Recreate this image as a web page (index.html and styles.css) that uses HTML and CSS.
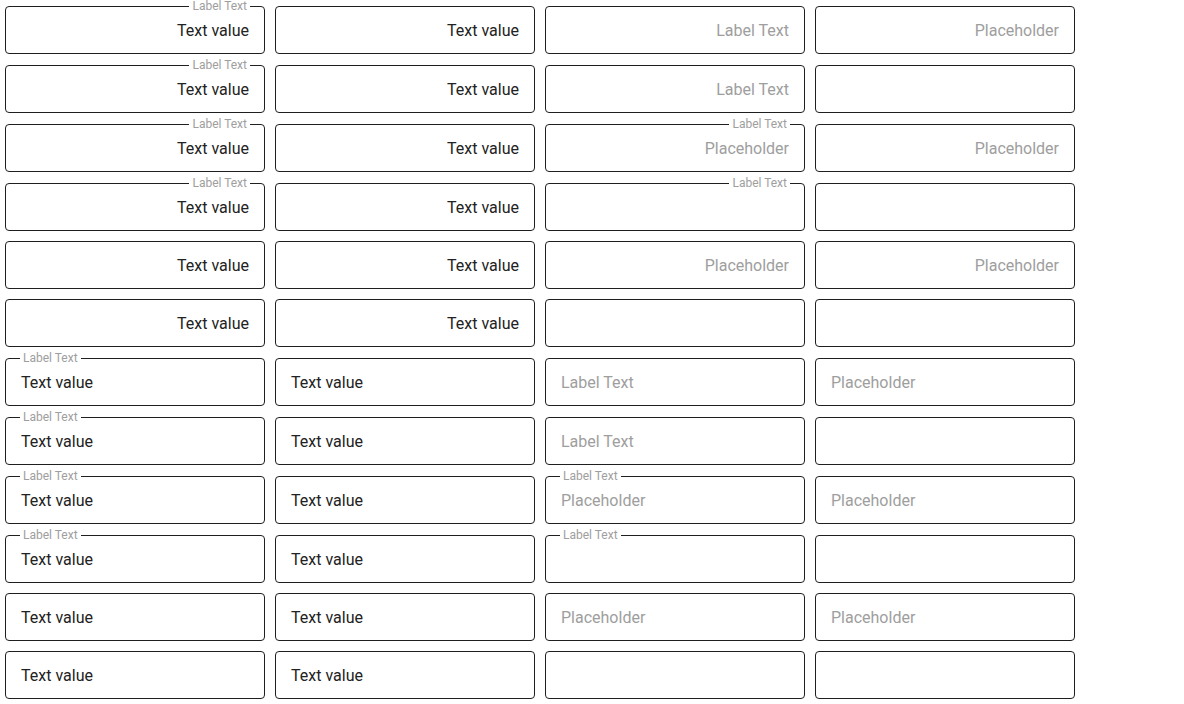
FILE: index.html
```html
<!DOCTYPE html>
<html>
<head>
<meta charset="utf-8">
<link rel="stylesheet" href="styles.css">
</head>
<body>
<div class="page">
  <div class="row lab end">
    <div class="field"><span class="label">Label Text</span><span class="value">Text value</span></div>
    <div class="field"><span class="value">Text value</span></div>
    <div class="field"><span class="value ph">Label Text</span></div>
    <div class="field"><span class="value ph">Placeholder</span></div>
  </div>
  <div class="row lab end">
    <div class="field"><span class="label">Label Text</span><span class="value">Text value</span></div>
    <div class="field"><span class="value">Text value</span></div>
    <div class="field"><span class="value ph">Label Text</span></div>
    <div class="field"></div>
  </div>
  <div class="row lab end">
    <div class="field"><span class="label">Label Text</span><span class="value">Text value</span></div>
    <div class="field"><span class="value">Text value</span></div>
    <div class="field"><span class="label">Label Text</span><span class="value ph">Placeholder</span></div>
    <div class="field"><span class="value ph">Placeholder</span></div>
  </div>
  <div class="row lab end">
    <div class="field"><span class="label">Label Text</span><span class="value">Text value</span></div>
    <div class="field"><span class="value">Text value</span></div>
    <div class="field"><span class="label">Label Text</span></div>
    <div class="field"></div>
  </div>
  <div class="row end">
    <div class="field"><span class="value">Text value</span></div>
    <div class="field"><span class="value">Text value</span></div>
    <div class="field"><span class="value ph">Placeholder</span></div>
    <div class="field"><span class="value ph">Placeholder</span></div>
  </div>
  <div class="row end">
    <div class="field"><span class="value">Text value</span></div>
    <div class="field"><span class="value">Text value</span></div>
    <div class="field"></div>
    <div class="field"></div>
  </div>
  <div class="row lab">
    <div class="field"><span class="label">Label Text</span><span class="value">Text value</span></div>
    <div class="field"><span class="value">Text value</span></div>
    <div class="field"><span class="value ph">Label Text</span></div>
    <div class="field"><span class="value ph">Placeholder</span></div>
  </div>
  <div class="row lab">
    <div class="field"><span class="label">Label Text</span><span class="value">Text value</span></div>
    <div class="field"><span class="value">Text value</span></div>
    <div class="field"><span class="value ph">Label Text</span></div>
    <div class="field"></div>
  </div>
  <div class="row lab">
    <div class="field"><span class="label">Label Text</span><span class="value">Text value</span></div>
    <div class="field"><span class="value">Text value</span></div>
    <div class="field"><span class="label">Label Text</span><span class="value ph">Placeholder</span></div>
    <div class="field"><span class="value ph">Placeholder</span></div>
  </div>
  <div class="row lab">
    <div class="field"><span class="label">Label Text</span><span class="value">Text value</span></div>
    <div class="field"><span class="value">Text value</span></div>
    <div class="field"><span class="label">Label Text</span></div>
    <div class="field"></div>
  </div>
  <div class="row">
    <div class="field"><span class="value">Text value</span></div>
    <div class="field"><span class="value">Text value</span></div>
    <div class="field"><span class="value ph">Placeholder</span></div>
    <div class="field"><span class="value ph">Placeholder</span></div>
  </div>
  <div class="row">
    <div class="field"><span class="value">Text value</span></div>
    <div class="field"><span class="value">Text value</span></div>
    <div class="field"></div>
    <div class="field"></div>
  </div>
</div>
</body>
</html>
```

FILE: styles.css
```css
html, body {
  margin: 0;
  padding: 0;
  background: #ffffff;
}

body {
  font-family: Roboto, "Liberation Sans", sans-serif;
}

.page {
  display: flex;
  flex-direction: column;
  gap: 10px;
  padding: 5px;
}

.row {
  display: flex;
  gap: 10px;
}

.row.lab {
  padding-top: 1px;
}

.field {
  position: relative;
  box-sizing: border-box;
  width: 260px;
  height: 48px;
  border: 1px solid #1f1f1f;
  border-radius: 4px;
  display: flex;
  align-items: center;
  padding: 0 15px;
}

.row.end .field {
  justify-content: flex-end;
}

.value {
  font-size: 16px;
  line-height: 20px;
  color: #222222;
  padding-top: 1px;
}

.value.ph {
  color: #9e9e9e;
}

.label {
  position: absolute;
  top: -8px;
  left: 14px;
  padding: 0 3px;
  background: #ffffff;
  font-size: 12px;
  line-height: 14px;
  color: #9e9e9e;
}

.row.end .label {
  left: auto;
  right: 14px;
}
```
